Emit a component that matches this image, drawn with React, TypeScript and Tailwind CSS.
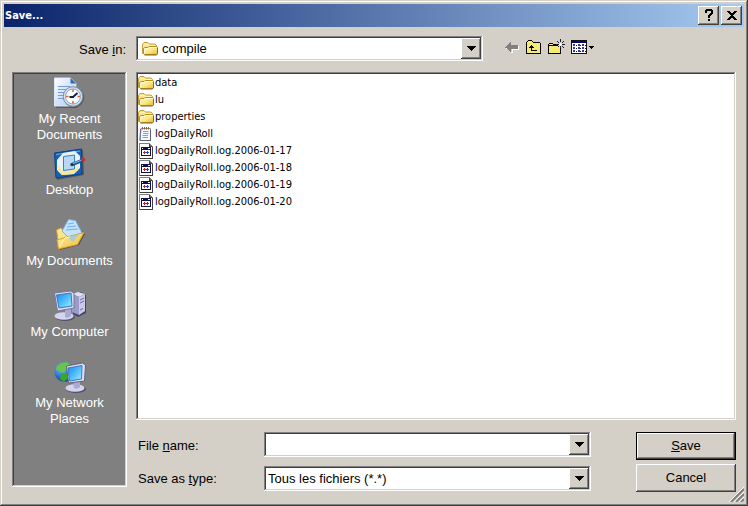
import React, { useState } from 'react';

const raised =
  'bg-[#d4d0c8] shadow-[inset_-1px_-1px_#404040,inset_1px_1px_#ffffff,inset_-2px_-2px_#808080]';
const sunken =
  'p-[2px] shadow-[inset_-1px_-1px_#ffffff,inset_1px_1px_#808080,inset_-2px_-2px_#d4d0c8,inset_2px_2px_#404040]';
const smallFont = "font-['Tahoma','DejaVu_Sans_Condensed','DejaVu_Sans',sans-serif] text-[11px]";

function FolderIcon() {
  return (
    <svg width="16" height="16" viewBox="0 0 16 16" className="shrink-0" aria-hidden="true">
      <defs>
        <linearGradient id="folderFace" x1="0" y1="0" x2="1" y2="1">
          <stop offset="0" stopColor="#fffbc4" />
          <stop offset="0.55" stopColor="#fbe77c" />
          <stop offset="1" stopColor="#e3b63c" />
        </linearGradient>
      </defs>
      <path d="M.5 12.5v-9L2 1.500h4L7.500 3h5.500l1.500 1.500v8z" fill="#f8e48c" stroke="#c79b38" />
      <path d="M2 3.500h4l1.500 1H13" fill="none" stroke="#fff6b8" />
      <path d="M2.500 13.500l-1-1V7.500l1.500-1h3l1-1h8l.5 1v6l-1 1z" fill="url(#folderFace)" stroke="#bb8c24" />
      <path d="M2.500 12V8l1-.500h3l1-1h7" fill="none" stroke="#fffde0" />
      <path d="M2.500 14h12l1-1.500V7" fill="none" stroke="#8c6818" />
    </svg>
  );
}

function NotepadIcon() {
  return (
    <svg width="16" height="16" viewBox="0 0 16 16" className="shrink-0" aria-hidden="true">
      <path d="M3 2.500h9.500v12H2z" fill="#f5f8ff" stroke="#8291b0" />
      <path d="M2.500 3 2 14.500" stroke="#5a6a96" />
      <path d="M5 5.500h5.500M5 7.500h5.500M4.500 9.500H10M4.500 11.500H10" stroke="#8c9cc8" />
      <path d="M4.500 1v2.500M6.500 1v2.500M8.500 1v2.500M10.500 1v2.500" stroke="#8c5a3c" />
      <path d="M2 14.500h10.500V4" fill="none" stroke="#59617a" />
    </svg>
  );
}

function LogIcon() {
  return (
    <svg width="16" height="16" viewBox="0 0 16 16" className="shrink-0" shapeRendering="crispEdges" aria-hidden="true">
      <path d="M1 0h11v1h1v1h1v1h1v13H1z" fill="#808080" />
      <path d="M2 1h9v3h3v11H2z" fill="#fff" />
      <path d="M11 1h1v2h2v1h-3zM14 4h1v12h-1zM2 15h13v1H2z" fill="#404040" />
      <path d="M3 4h10v9H3z" fill="#10104c" />
      <path d="M4 7h8v5H4z" fill="#fff" />
      <path d="M5 9h1V8h1v1h1v1H7v1H6v-1H5z" fill="#c02020" />
      <path d="M9 8h1v1h1v1h-1v1H9v-1H8V9h1z" fill="#2040c8" />
      <path d="M4 5h1v1H4zM10 5h2v1h-2z" fill="#fff" />
    </svg>
  );
}

function RecentIcon() {
  return (
    <svg width="32" height="32" viewBox="0 0 32 32" aria-hidden="true">
      <defs>
        <linearGradient id="page" x1="0" y1="0" x2="1" y2="1">
          <stop offset="0" stopColor="#ffffff" />
          <stop offset="1" stopColor="#a9c8f5" />
        </linearGradient>
      </defs>
      <path d="M2 2h16l5 5v24H2z" fill="#333" opacity=".5" />
      <path d="M.5 1h16L22 6.500V29H.5z" fill="url(#page)" stroke="#dce8fb" />
      <path d="M16.500 1 22 6.500h-5.500z" fill="#3169b8" />
      <path d="M4 9.500h12M4 12.500h9M4 15.500h6M4 18.500h5M4 21.500h6" stroke="#739ddd" />
      <circle cx="20" cy="20.500" r="10.200" fill="#3c3c3c" opacity=".55" />
      <circle cx="19" cy="19.500" r="9.800" fill="#d9dde5" stroke="#7c8ca2" />
      <circle cx="19" cy="19.500" r="7.500" fill="#f8fcff" stroke="#81a9c4" />
      <path d="M19 12.500v2.500M19 24v2.500M12 19.500h2.500M23.500 19.500H26" stroke="#df6338" strokeWidth="1.500" />
      <path d="m19 20 4.500-4M15.500 20H20" stroke="#112238" strokeWidth="1.800" />
    </svg>
  );
}

function DesktopIcon() {
  return (
    <svg width="32" height="32" viewBox="0 0 32 32" aria-hidden="true">
      <path d="m2 5 27-3 1 25-27 5z" fill="#303030" opacity=".5" />
      <path d="m.5 5 27-4 .5 25-26 4z" fill="#1761b7" stroke="#0b3f87" />
      <path d="m2 6.500 24-3.500" stroke="#6badec" />
      <path d="m9 5 12-2 5 5v12l-6 6-12 1-5-5V12z" fill="#e9f3f7" />
      <path d="m4 17 4 6 12-1 5-5-1 5-5 4-11 1-4-4z" fill="#f8e88e" />
      <path d="m9.500 8.500 11-1.500v14l-11 1.500z" fill="#b8d9f5" stroke="#3482c2" />
      <path d="m17 17 11-4.500" stroke="#154f94" strokeWidth="3.500" />
      <path d="m18 16 10-4" stroke="#82bcf2" strokeWidth="1.300" />
      <path d="m15.500 17.500 3-2.500 1 2z" fill="#151f2c" />
      <ellipse cx="29" cy="11.500" rx="2.300" ry="2" fill="#c53125" />
    </svg>
  );
}

function DocumentsIcon() {
  return (
    <svg width="32" height="32" viewBox="0 0 32 32" aria-hidden="true">
      <defs>
        <linearGradient id="openFolder" x1="0" y1="0" x2="1" y2="1">
          <stop offset="0" stopColor="#fff4a0" />
          <stop offset="1" stopColor="#efb73d" />
        </linearGradient>
      </defs>
      <path d="m6 31 19-5 6-11-3-3-22 5z" fill="#333" opacity=".6" />
      <path d="m2.500 11 4-2 3 2 15-2 .5 13L5 29z" fill="#fbe68c" stroke="#cf9d30" />
      <path d="m14.500.5 7 1L28 14l-9 9L8 12z" fill="#c3e3ff" stroke="#75aee8" />
      <path d="m14 5 6-1M13 8l9-1M12 11l12-1" stroke="#75aee8" />
      <path d="m11 18.500 19-5-6.500 12L4.500 30 3 21z" fill="url(#openFolder)" stroke="#d89e2a" />
      <path d="m13 18 12-3-6 8z" fill="#8fcaf2" opacity=".75" />
      <path d="m5 28 6-9 5-1" fill="none" stroke="#fffac8" />
    </svg>
  );
}

function ScreenGradient() {
  return (
    <defs>
      <linearGradient id="screen" x1="0" y1="0" x2="1" y2="1">
        <stop offset="0" stopColor="#1c86f2" />
        <stop offset="0.5" stopColor="#4fbcff" />
        <stop offset="1" stopColor="#a5f0ff" />
      </linearGradient>
    </defs>
  );
}

function ComputerIcon() {
  return (
    <svg width="32" height="32" viewBox="0 0 32 32" aria-hidden="true">
      <ScreenGradient />
      <path d="m20 4 7-2 5 3v18l-8 4-5-3z" fill="#454564" />
      <path d="m18 4 6-2 7 2-6 3z" fill="#e1e1f4" />
      <path d="m18 4 7 3v18l-7-3z" fill="#9b9bcb" />
      <path d="m25 7 6-3v17l-6 4z" fill="#c9c9e8" />
      <path d="m26 10 4-2M26 13l4-2M26 20l3-1.500" stroke="#6868a4" />
      <ellipse cx="11" cy="27" rx="10" ry="4" fill="#51516c" />
      <ellipse cx="10" cy="26" rx="9.500" ry="3.800" fill="#d4d4ef" />
      <path d="m11 19 6-1v8q-3 3-6 1z" fill="#aaaad4" />
      <path d="m.5 3 16-2L20 3v15L3.500 21z" fill="#dedef5" stroke="#777796" />
      <path d="M2.500 5 17 3l1 13-13 2z" fill="url(#screen)" stroke="#3c79ba" />
    </svg>
  );
}

function NetworkIcon() {
  return (
    <svg width="32" height="32" viewBox="0 0 32 32" aria-hidden="true">
      <defs>
        <radialGradient id="globe" cx=".35" cy=".3" r=".75">
          <stop offset="0" stopColor="#7cc5ff" />
          <stop offset=".6" stopColor="#276fd0" />
          <stop offset="1" stopColor="#123d92" />
        </radialGradient>
      </defs>
      <circle cx="10.500" cy="11" r="10" fill="url(#globe)" />
      <path d="m7 2 6-1 4 3-3 3-2 1-2 4-4-2-4-1 1-4z" fill="#66c646" />
      <path d="m7 12 6 1 2 3-5 5-4-3z" fill="#3ba531" />
      <ellipse cx="22" cy="28" rx="10" ry="4" fill="#51516c" />
      <ellipse cx="21" cy="27" rx="9.500" ry="3.800" fill="#d4d4ef" />
      <path d="m19 20 7-1v7q-3 3-6 1z" fill="#aaaad4" />
      <path d="m12.500 5 16-3 3 2-1 16-16 2z" fill="#dedef5" stroke="#62627e" />
      <path d="m14 7 14-2.500-.5 13.500-12 2z" fill="url(#screen)" stroke="#3c79ba" />
    </svg>
  );
}

function BackIcon() {
  return (
    <svg width="16" height="16" viewBox="0 0 16 16" shapeRendering="crispEdges" aria-hidden="true">
      <path d="M2 9h1v1h1v1h1v1h1v1h2v-3h6V7h1v4H9v3H7v-1H6v-1H5v-1H4v-1H2z" fill="#fff" />
      <path d="M1 8h1V7h1V6h1V5h1V4h1V3h1v3h7v4H7v3H6v-1H5v-1H4v-1H3V9H1z" fill="#808080" />
    </svg>
  );
}

function UpFolderIcon() {
  return (
    <svg width="16" height="16" viewBox="0 0 16 16" shapeRendering="crispEdges" aria-hidden="true">
      <path d="M0 3h1V2h6v1h7v1h1v11H0z" fill="#f4ec72" />
      <path d="M0 3h1v11h13V4h1v11H0zM1 2h1v1H1zM2 1h4v1H2zM6 2h1v1H6zM7 3h7v1H7z" fill="#000" />
      <path d="M5 6h1v1h1v1h1v1H6v2h5v1H5V9H3V8h1V7h1z" fill="#000" />
    </svg>
  );
}

function NewFolderIcon() {
  return (
    <svg width="17" height="16" viewBox="0 0 17 16" shapeRendering="crispEdges" aria-hidden="true">
      <path d="M1 5h4v1h7v8H1z" fill="#f4ec72" />
      <path d="M0 5h1v9h11V7h1v8H0zM1 4h4v1H1zM5 5h5v1H5zM1 6h9v1H1z" fill="#000" />
      <path d="M12 0h1v3h-1zM12 7h1v2h-1zM8 5h3v1H8zM14 5h3v1h-3zM9 2h1v1H9zM10 3h1v1h-1zM15 2h1v1h-1zM14 3h1v1h-1zM14 7h1v1h-1zM15 8h1v1h-1zM10 7h1v1h-1z" fill="#202020" />
      <path d="M12 4h1v1h1v1h-1v1h-1V6h-1V5h1z" fill="#fff" />
    </svg>
  );
}

function ViewIcon() {
  return (
    <svg width="24" height="16" viewBox="0 0 24 16" shapeRendering="crispEdges" aria-hidden="true">
      <path d="M0 1h16v14H0z" fill="#111" />
      <path d="M1 2h14v2H1z" fill="#080872" />
      <path d="M1 4h14v10H1z" fill="#fff" />
      <path d="M2 5h2v2H2zM7 5h2v2H7zM11 5h2v2h-2zM2 8h2v2H2zM7 8h2v2H7zM11 8h2v2h-2zM2 11h2v2H2zM7 11h2v2H7zM11 11h2v2h-2z" fill="#3434a5" />
      <path d="M5 6h1v1H5zM9 6h1v1H9zM14 6h1v1h-1zM5 9h1v1H5zM9 9h1v1H9zM14 9h1v1h-1zM5 12h1v1H5zM9 12h1v1H9zM14 12h1v1h-1z" fill="#111" />
      <path d="M18 7h5v1h-1v1h-1v1h-1V9h-1V8h-1z" fill="#000" />
    </svg>
  );
}

function ArrowBox() {
  return (
    <span className={`pointer-events-none flex w-5 items-center justify-center self-stretch justify-self-end ${raised}`}>
      <svg width="9" height="5" viewBox="0 0 9 5" shapeRendering="crispEdges" aria-hidden="true">
        <path d="M0 0h9v1H8v1H7v1H6v1H5v1H4V4H3V3H2V2H1V1H0z" />
      </svg>
    </span>
  );
}

const places = [
  { lines: ['My Recent', 'Documents'], Icon: RecentIcon },
  { lines: ['Desktop'], Icon: DesktopIcon },
  { lines: ['My Documents'], Icon: DocumentsIcon },
  { lines: ['My Computer'], Icon: ComputerIcon },
  { lines: ['My Network', 'Places'], Icon: NetworkIcon },
];

const files = [
  { name: 'data', Icon: FolderIcon },
  { name: 'lu', Icon: FolderIcon },
  { name: 'properties', Icon: FolderIcon },
  { name: 'logDailyRoll', Icon: NotepadIcon },
  { name: 'logDailyRoll.log.2006-01-17', Icon: LogIcon },
  { name: 'logDailyRoll.log.2006-01-18', Icon: LogIcon },
  { name: 'logDailyRoll.log.2006-01-19', Icon: LogIcon },
  { name: 'logDailyRoll.log.2006-01-20', Icon: LogIcon },
];

export default function App() {
  const [fileName, setFileName] = useState('');

  return (
    <main className="relative flex min-h-screen flex-col bg-[#d4d0c8] p-1 font-['Liberation_Sans',Arial,sans-serif] text-[13px] leading-4 text-black shadow-[inset_-1px_-1px_#404040,inset_1px_1px_#d4d0c8,inset_-2px_-2px_#808080,inset_2px_2px_#ffffff]">
      <header className="flex h-[23px] items-center gap-[2px] bg-linear-to-r/srgb from-[#0a246a] to-[#a6caf0] pr-[2px] pl-px">
        <h1 className={`flex-1 font-bold text-white ${smallFont}`}>Save...</h1>
        <button type="button" aria-label="Help" className={`flex h-[19px] w-[21px] items-center justify-center ${raised}`}>
          <svg width="10" height="13" viewBox="0 0 10 13" shapeRendering="crispEdges" aria-hidden="true">
            <path d="M2 0h6v1h1v4H8v1H7v1H6v2H4V6h1V5h1V4h1V2H3v2H1V1h1zM4 10h2v2H4z" />
          </svg>
        </button>
        <button type="button" aria-label="Close" className={`flex h-[19px] w-[21px] items-center justify-center ${raised}`}>
          <svg width="10" height="9" viewBox="0 0 10 9" shapeRendering="crispEdges" aria-hidden="true">
            <path d="M0 0h3v1h1v1h2V1h1V0h3v1H9v1H8v1H7v1H6v1h1v1h1v1h1v1h1v1H7V8H6V7H4v1H3v1H0V8h1V7h1V6h1V5h1V4H3V3H2V2H1V1H0z" />
          </svg>
        </button>
      </header>

      <div className="flex items-center px-2 pt-[9px]">
        <label htmlFor="folder" className="w-[124px] pt-[2px] pr-[10px] text-right">
          Save <u>i</u>n:
        </label>
        <div className={`flex h-[25px] flex-1 items-center bg-white ${sunken}`}>
          <span className="pr-1 pl-1">
            <FolderIcon />
          </span>
          <div className="grid h-full flex-1 items-center">
            <select id="folder" className="col-start-1 row-start-1 h-full w-full appearance-none bg-transparent pr-5 outline-none">
              <option>compile</option>
            </select>
            <span className="pointer-events-none col-start-1 row-start-1 grid h-full">
              <ArrowBox />
            </span>
          </div>
        </div>
        <div className="flex w-[253px] items-center gap-[6px] pr-1 pb-1 pl-[21px]">
          <button type="button" aria-label="Back" disabled>
            <BackIcon />
          </button>
          <button type="button" aria-label="Up one level">
            <UpFolderIcon />
          </button>
          <button type="button" aria-label="Create new folder">
            <NewFolderIcon />
          </button>
          <button type="button" aria-label="View menu">
            <ViewIcon />
          </button>
        </div>
      </div>

      <div className="flex flex-1 gap-[9px] px-2 pt-[11px] pb-[10px]">
        <div className="flex w-[115px] flex-col pb-[5px]">
          <nav aria-label="Places" className={`flex-1 bg-[#808080] text-white ${sunken}`}>
            {places.map(({ lines, Icon }) => (
              <button key={lines[0]} type="button" className="flex h-[71px] w-full flex-col items-center gap-[2px] pt-[3px]">
                <Icon />
                <span>
                  {lines.map((line) => (
                    <span key={line} className="block">
                      {line}
                    </span>
                  ))}
                </span>
              </button>
            ))}
          </nav>
        </div>

        <section className="flex flex-1 flex-col">
          <ul aria-label="Files" className={`flex-1 bg-white ${sunken}`}>
            {files.map(({ name, Icon }) => (
              <li key={name}>
                <button type="button" className={`flex h-[17px] items-center gap-px ${smallFont}`}>
                  <Icon />
                  {name}
                </button>
              </li>
            ))}
          </ul>

          <form className="flex gap-[45px] pt-3" onSubmit={(event) => event.preventDefault()}>
            <div className="flex flex-1 flex-col gap-[9px]">
              <div className="flex items-center">
                <label htmlFor="filename" className="w-[128px] pt-[2px] pl-[2px]">
                  File <u>n</u>ame:
                </label>
                <div className={`flex h-[25px] flex-1 bg-white ${sunken}`}>
                  <input
                    id="filename"
                    type="text"
                    value={fileName}
                    onChange={(event) => setFileName(event.target.value)}
                    className="min-w-0 flex-1 bg-transparent px-[2px] outline-none"
                  />
                  <ArrowBox />
                </div>
              </div>
              <div className="flex items-center">
                <label htmlFor="filetype" className="w-[128px] pl-[2px]">
                  Save as <u>t</u>ype:
                </label>
                <div className={`grid h-[25px] flex-1 bg-white ${sunken}`}>
                  <select id="filetype" className="col-start-1 row-start-1 h-full w-full appearance-none bg-transparent pr-5 pl-[2px] outline-none">
                    <option>Tous les fichiers (*.*)</option>
                  </select>
                  <span className="pointer-events-none col-start-1 row-start-1 grid h-full">
                    <ArrowBox />
                  </span>
                </div>
              </div>
            </div>
            <div className="flex w-[100px] flex-col gap-1">
              <button type="submit" className="h-7 border border-black bg-[#d4d0c8] shadow-[inset_-1px_-1px_#404040,inset_1px_1px_#ffffff,inset_-2px_-2px_#808080]">
                <u>S</u>ave
              </button>
              <button type="button" className={`h-7 ${raised}`}>
                Cancel
              </button>
            </div>
          </form>
        </section>
      </div>

      <svg width="15" height="15" viewBox="0 0 15 15" className="absolute right-1 bottom-1" aria-hidden="true">
        <path d="M0 15 15 0M5 15 15 5M10 15l5-5" stroke="#fff" />
        <path d="M2 15 15 2M7 15l8-8M12 15l3-3" stroke="#808080" strokeWidth="2" />
      </svg>
    </main>
  );
}
